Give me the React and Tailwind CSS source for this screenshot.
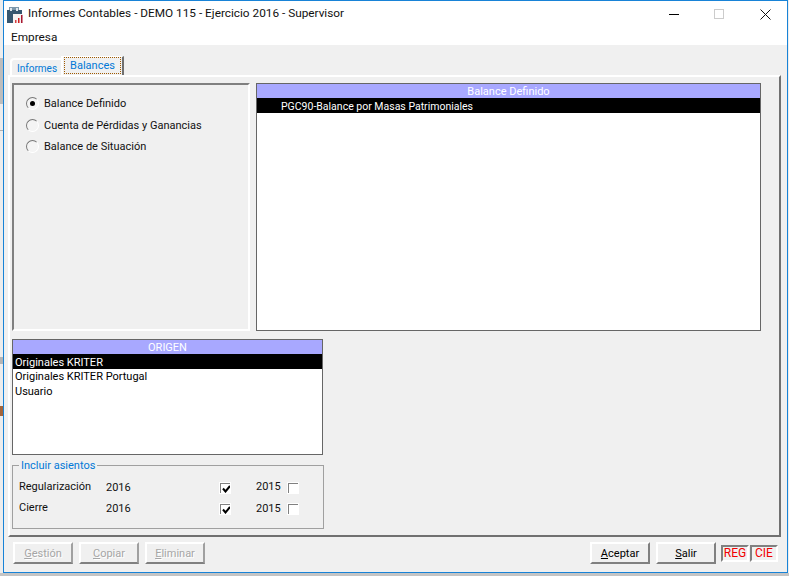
const Radio = ({ checked, label }) => (
  <div className="flex items-center h-[21.5px]">
    <span className="w-[13px] h-[13px] rounded-full bg-[#f4f4f4] border border-[#777] border-r-white border-b-white flex items-center justify-center">
      {checked && <span className="w-[5px] h-[5px] rounded-full bg-black" />}
    </span>
    <span className="ml-[5px] pt-[1.5px] text-[#111]">{label}</span>
  </div>
);

const Check = ({ checked }) => (
  <span className="w-[12px] h-[12px] bg-white border-t-2 border-l-2 border-t-[#808080] border-l-[#808080] outline outline-1 outline-white -outline-offset-1 flex items-center justify-center">
    {checked && (
      <svg width="9" height="8" viewBox="0 0 9 8">
        <path d="M1 3.5 L3.5 6.5 L8 1" fill="none" stroke="#000" strokeWidth="2" />
      </svg>
    )}
  </span>
);

const ListBox = ({ title, items, className, itemClass }) => (
  <div className={`border border-[#666] bg-white ${className}`}>
    <div className="h-[14px] bg-[#a8a8ff] text-white text-center leading-[16px]">{title}</div>
    {items.map((item, i) => (
      <div
        key={item}
        className={`${itemClass} ${i === 0 ? "h-[15px] leading-[17px] bg-black text-white" : "h-[14.5px] leading-[16px] text-black"}`}
      >
        {item}
      </div>
    ))}
  </div>
);

const Btn = ({ k, rest, disabled }) => (
  <div
    className={`w-[60px] h-[22px] flex items-center justify-center pt-[2px] border-2 border-white border-r-[#808080] border-b-[#808080] ${disabled ? "text-[#a6a6a6] [text-shadow:1px_1px_0_#fff] border-r-[#a0a0a0]" : "text-black"}`}
  >
    <span>
      <u>{k}</u>
      {rest}
    </span>
  </div>
);

const YearRow = ({ label, checked }) => (
  <div className="flex items-center h-[21.5px] text-[#111]">
    <span className="w-[87px] pb-[1.5px]">{label}</span>
    <span className="w-[113px]">2016</span>
    <Check checked={checked} />
    <span className="ml-[25px] pb-[1px]">2015</span>
    <span className="ml-[6px]">
      <Check />
    </span>
  </div>
);

export default function App() {
  return (
    <div className="w-[789px] h-[576px] overflow-hidden bg-[#ededed] font-['Roboto','Liberation_Sans',sans-serif] text-[11px] flex flex-col">
      <div className="flex h-[573px] shrink-0">
        {/* bits of the windows behind */}
        <div className="w-[3px] h-full flex flex-col shrink-0">
          <div className="h-[58px] shrink-0" />
          <div className="h-[46px] bg-[#bdbdbd] shrink-0" />
          <div className="h-[26px] shrink-0" />
          <div className="h-px bg-[#b0b0b0] shrink-0" />
          <div className="h-[226px] shrink-0" />
          <div className="h-[7px] bg-[#b5b5b5] shrink-0" />
          <div className="h-[42px] shrink-0" />
          <div className="h-[10px] bg-[#a5653a] shrink-0" />
        </div>
        <div className="w-[785px] h-[573px] border border-[#1883d7] bg-[#f0f0f0] flex flex-col">
          {/* title bar */}
          <div className="h-[26px] bg-white flex items-center shrink-0">
            <svg className="ml-[3px]" width="17" height="17" viewBox="0 0 17 17">
              <rect x="0" y="4" width="15" height="13" fill="#36566f" />
              <rect x="2" y="1" width="10" height="3" fill="#7d98ac" />
              <rect x="3" y="2" width="2" height="3" fill="#dfe7ed" />
              <rect x="9" y="2" width="2" height="3" fill="#dfe7ed" />
              <rect x="6" y="8" width="10" height="9" fill="#f6f2f2" />
              <rect x="8" y="14" width="1.5" height="3" fill="#d84040" />
              <rect x="11" y="12" width="1.5" height="5" fill="#d02020" />
              <rect x="14" y="9" width="1.5" height="8" fill="#a81830" />
            </svg>
            <span className="ml-[4px] text-[11.8px] text-[#111]">Informes Contables - DEMO 115 - Ejercicio 2016 - Supervisor</span>
            <div className="ml-auto flex items-center mr-[16px]">
              <span className="w-[10px] h-px bg-black" />
              <span className="ml-[35px] w-[10px] h-[10px] border border-[#ccc]" />
              <svg className="ml-[36px]" width="11" height="11" viewBox="0 0 11 11">
                <path d="M0.5 0.5 L10.5 10.5 M10.5 0.5 L0.5 10.5" stroke="#111" strokeWidth="1" />
              </svg>
            </div>
          </div>
          {/* menu */}
          <div className="h-[18px] bg-white flex items-center pl-[7px] pt-[4px] text-[11.8px] text-[#111] shrink-0">Empresa</div>

          {/* tabs */}
          <div className="mt-[11px] ml-[6px] h-[19px] flex items-end shrink-0 text-[#0078d7]">
            <div className="h-[17px] w-[51px] border-l-2 border-t-2 border-white pl-[5px] leading-[17px] text-[10px] rounded-tl-sm">Informes</div>
            <div className="h-[19px] w-[63px] border-l-2 border-t border-white border-r-2 border-r-[#707070] px-[1px]">
              <div className="h-[17px] border border-dotted border-[#a05a00] text-center leading-[16px]">Balances</div>
            </div>
          </div>

          {/* tab page */}
          <div className="w-[773px] ml-[4px] h-[462px] border-2 border-white border-r-[#707070] border-b-[#707070] shrink-0">
            <div className="flex mt-[6px] ml-[2px] gap-[6px]">
              <div className="w-[238px] h-[248px] border-2 border-[#808080] border-r-white border-b-white pl-[12px] pt-[8px]">
                <Radio checked label="Balance Definido" />
                <Radio label="Cuenta de Pérdidas y Ganancias" />
                <Radio label="Balance de Situación" />
              </div>
              <ListBox
                title="Balance Definido"
                items={["PGC90-Balance por Masas Patrimoniales"]}
                className="w-[505px] h-[248px]"
                itemClass="pl-[24px] text-[10.5px]"
              />
            </div>

            <ListBox
              title="ORIGEN"
              items={["Originales KRITER", "Originales KRITER Portugal", "Usuario"]}
              className="w-[311px] h-[116px] ml-[2px] mt-[8px]"
              itemClass="pl-[2px]"
            />

            {/* group box */}
            <div className="relative w-[312px] h-[64px] ml-[2px] mt-[10px] border border-[#a0a0a0] pl-[6px] pt-[11px]">
              <span className="absolute left-[6px] -top-[8px] bg-[#f0f0f0] px-[2px] text-[#0078d7]">Incluir asientos</span>
              <YearRow label="Regularización" checked />
              <YearRow label="Cierre" checked />
            </div>
          </div>

          {/* bottom buttons */}
          <div className="flex items-center mt-[5px] ml-[9px] mr-[9px] h-[22px]">
            <div className="flex gap-[6px]">
              <Btn k="G" rest="estión" disabled />
              <Btn k="C" rest="opiar" disabled />
              <Btn k="E" rest="liminar" disabled />
            </div>
            <div className="ml-auto flex items-center">
              <Btn k="A" rest="ceptar" />
              <div className="ml-[6px]">
                <Btn k="S" rest="alir" />
              </div>
              <div className="ml-[5px] flex gap-px text-[#f00000] text-[12px]">
                <span className="w-[28px] h-[17px] border-2 border-[#808080] border-r-white border-b-white flex items-center justify-center">REG</span>
                <span className="w-[28px] h-[17px] border-2 border-[#808080] border-r-white border-b-white flex items-center justify-center">CIE</span>
              </div>
            </div>
          </div>
        </div>
      </div>
      <div className="h-[3px] bg-[#c4c4c4]" />
    </div>
  );
}
